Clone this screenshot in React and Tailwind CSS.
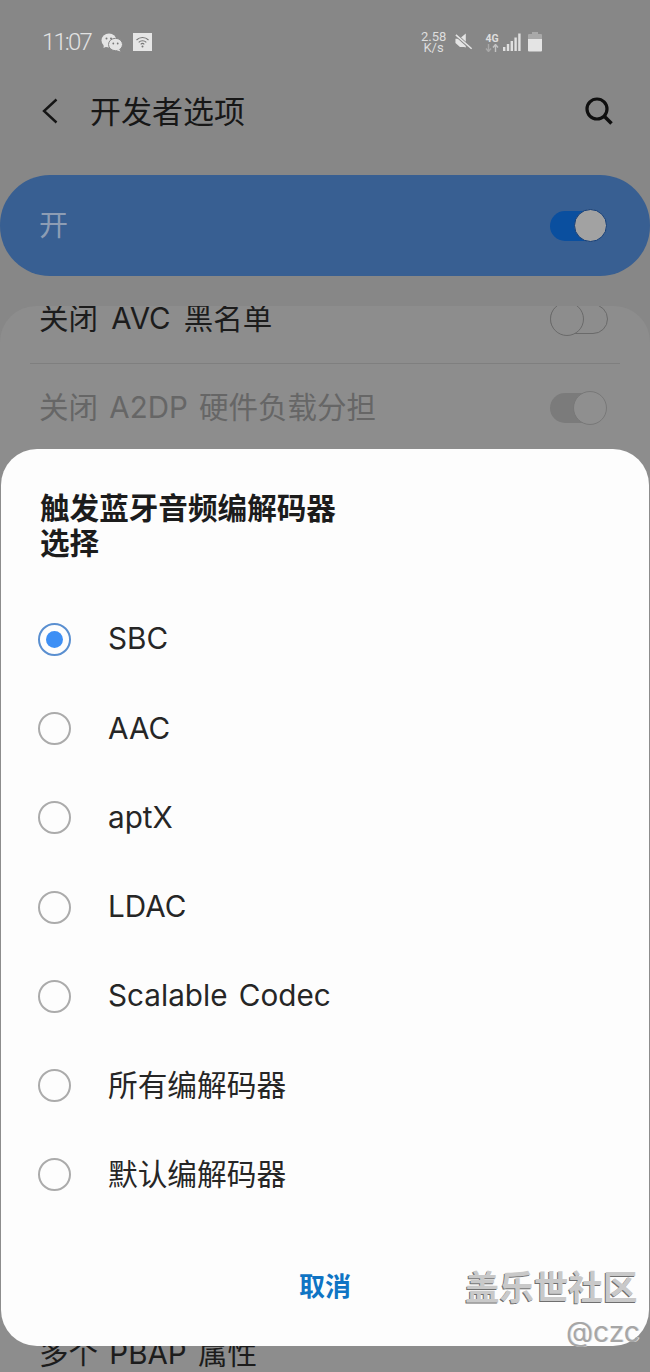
const FONT = "font-['Inter','Noto_Sans_CJK_SC',sans-serif]"

const options = ['SBC', 'AAC', 'aptX', 'LDAC', 'Scalable Codec', '所有编解码器', '默认编解码器']

function StatusLeft() {
  return (
    <div className="flex items-center gap-[10px]">
      <span className="font-['Roboto'] text-[24px] font-light leading-none tracking-[-1.9px] text-[#e2e2e2]">11:07</span>
      {/* wechat */}
      <svg width="22" height="19" viewBox="0 0 22 19">
        <ellipse cx="8" cy="7.5" rx="7.5" ry="7" fill="#e4e4e4" />
        <path d="M3 11 L2.5 15 L7 13 Z" fill="#e4e4e4" />
        <ellipse cx="14.5" cy="11.5" rx="7" ry="6.2" fill="#e4e4e4" stroke="#868686" strokeWidth="1" />
        <path d="M18 16 L19.5 18.5 L15 17 Z" fill="#e4e4e4" />
        <circle cx="5.5" cy="5.5" r="1" fill="#777" />
        <circle cx="10" cy="5.5" r="1" fill="#777" />
        <circle cx="12.3" cy="10.5" r="0.9" fill="#777" />
        <circle cx="16.7" cy="10.5" r="0.9" fill="#777" />
      </svg>
      {/* wifi box */}
      <svg width="19" height="18" viewBox="0 0 19 18">
        <rect width="19" height="18" fill="#e6e6e6" />
        <path d="M3.5 7 A8.5 8.5 0 0 1 15.5 7" stroke="#777" strokeWidth="1.1" fill="none" />
        <path d="M5.7 9.3 A5.4 5.4 0 0 1 13.3 9.3" stroke="#777" strokeWidth="1.1" fill="none" />
        <path d="M7.7 11.3 A2.6 2.6 0 0 1 11.3 11.3" stroke="#777" strokeWidth="1.1" fill="none" />
        <circle cx="9.5" cy="13.6" r="1" fill="#777" />
      </svg>
    </div>
  )
}

function StatusRight() {
  return (
    <div className="flex items-center font-['Roboto']">
      <div className="w-[25px] text-center text-[13px] leading-[11px] text-[#dedede]">
        <div>2.58</div>
        <div>K/s</div>
      </div>
      {/* muted speaker */}
      <svg width="18" height="18" viewBox="0 0 20 20" className="ml-[9px]">
        <path d="M0.5 6.5 H5 L12 0.5 V16 L10 15.5 H5.5 L0.5 11 Z" fill="#e4e4e4" />
        <path d="M1.5 2.5 L18.5 18" stroke="#868686" strokeWidth="3.5" />
        <path d="M1 2 L18.5 17.5" stroke="#e4e4e4" strokeWidth="1.8" />
      </svg>
      <div className="ml-[11px] flex w-[16px] flex-col items-center">
        <span className="text-[10.5px] font-bold leading-[11px] text-[#dedede]">4G</span>
        <svg width="14" height="8" viewBox="0 0 14 8">
          <path d="M3.5 0 V7 M1 4.5 L3.5 7.5 L6 4.5" stroke="#a8a8a8" strokeWidth="1.4" fill="none" />
          <path d="M10.5 8 V1 M8 3.5 L10.5 0.5 L13 3.5" stroke="#c4c4c4" strokeWidth="1.4" fill="none" />
        </svg>
      </div>
      {/* signal */}
      <svg width="18" height="18" viewBox="0 0 18 18" className="ml-[3px]">
        <rect x="0" y="14" width="2.4" height="4" fill="#e0e0e0" />
        <rect x="3.8" y="11" width="2.4" height="7" fill="#e0e0e0" />
        <rect x="7.6" y="8" width="2.4" height="10" fill="#e0e0e0" />
        <rect x="11.4" y="4.5" width="2.4" height="13.5" fill="#e0e0e0" />
        <rect x="15.2" y="0.5" width="2.4" height="17.5" fill="#e0e0e0" />
      </svg>
      {/* battery */}
      <svg width="14" height="20" viewBox="0 0 14 20" className="ml-[7px]">
        <path d="M4 0 H10 V2 H13 Q14 2 14 3 V7 H0 V3 Q0 2 1 2 H4 Z" fill="#a9a9a9" />
        <path d="M0 7 H14 V18.5 Q14 19.5 13 19.5 H1 Q0 19.5 0 18.5 Z" fill="#e4e4e4" />
      </svg>
    </div>
  )
}

function Toggle({ kind }) {
  if (kind === 'blue') {
    return (
      <div className="relative h-[30px] w-[57px]">
        <div className="h-full w-[40px] rounded-l-full bg-[#0a4f9f]" />
        <div className="absolute right-0 top-[-2px] h-[33px] w-[33px] rounded-full border-[1.5px] border-[#163f78] bg-[#a2a2a2]" />
      </div>
    )
  }
  if (kind === 'off') {
    return (
      <div className="relative h-[30px] w-[58px] rounded-full border-[1.5px] border-[#6a6a6a]">
        <div className="absolute left-[-1.5px] top-[-3px] h-[34px] w-[34px] rounded-full border-[1.5px] border-[#6a6a6a] bg-[#8d8d8d]" />
      </div>
    )
  }
  return (
    <div className="relative h-[30px] w-[57px]">
      <div className="h-full w-[40px] rounded-l-full bg-[#7b7b7b]" />
      <div className="absolute right-0 top-[-2px] h-[34px] w-[34px] rounded-full border-[1.5px] border-[#787878] bg-[#8f8f8f]" />
    </div>
  )
}

function Radio({ checked }) {
  return (
    <div className={`flex h-[33px] w-[33px] items-center justify-center rounded-full border-2 ${checked ? 'border-[#5a8fd0]' : 'border-[#ababab]'}`}>
      {checked && <div className="h-[17px] w-[17px] rounded-full bg-[#3d8ff5]" />}
    </div>
  )
}

export default function App() {
  return (
    <div className={`${FONT} relative h-[1372px] w-[650px] overflow-hidden bg-[#878787] [word-spacing:3px]`}>
      {/* status bar */}
      <div className="flex h-[84px] items-center justify-between pl-[42px] pr-[108px]">
        <StatusLeft />
        <StatusRight />
      </div>

      {/* title */}
      <div className="flex h-[54px] items-center pl-[42px] pr-[37px]">
        <svg width="16" height="26" viewBox="0 0 16 26">
          <path d="M14.5 1.5 L2 13 L14.5 24.5" stroke="#151515" strokeWidth="2.4" fill="none" />
        </svg>
        <span className="ml-[32px] text-[31px] leading-none text-[#171717]">开发者选项</span>
        <svg width="28" height="28" viewBox="0 0 28 28" className="ml-auto">
          <circle cx="12" cy="12" r="10" stroke="#0f0f0f" strokeWidth="3.2" fill="none" />
          <path d="M19 19 L26.5 26.5" stroke="#0f0f0f" strokeWidth="3.6" />
        </svg>
      </div>

      {/* master switch */}
      <div className="mt-[37px] flex h-[101px] items-center justify-between rounded-[50px] bg-[#385f92] pl-[39px] pr-[43px]">
        <span className="text-[29px] leading-none text-[#8d9db4]">开</span>
        <Toggle kind="blue" />
      </div>

      {/* settings list behind the dialog */}
      <div className="mt-[30px] h-[1066px] overflow-hidden rounded-t-[36px] bg-[#8d8d8d] px-[30px]">
        <div className="mt-[-32px]">
          <div className="flex h-[90px] items-center justify-between border-b border-[#7f7f7f] pl-[9px] pr-[12px]">
            <span className="text-[29.5px] leading-none text-[#1c1c1c] [word-spacing:5px]">关闭 AVC 黑名单</span>
            <Toggle kind="off" />
          </div>
          <div className="flex h-[88px] items-center justify-between pl-[9px] pr-[13px]">
            <span className="text-[29.5px] leading-none text-[#666666]">关闭 A2DP 硬件负载分担</span>
            <Toggle kind="dim" />
          </div>
          <div className="mt-[887px] pl-[9px]">
            <span className="text-[29.5px] leading-none text-[#1c1c1c]">多个 PBAP 属性</span>
          </div>
        </div>
      </div>

      {/* dialog */}
      <div className="absolute left-[1px] right-[1px] top-[449px] h-[897px] rounded-[36px] bg-[#fdfdfd] pl-[37px]">
        <div className="pl-[2px] pt-[42px] text-[29.6px] font-bold leading-[35px] text-[#1c1c1c]">
          <div>触发蓝牙音频编解码器</div>
          <div>选择</div>
        </div>
        <div className="mt-[33.5px]">
          {options.map((o, i) => (
            <div key={o} className="flex h-[89.3px] items-center gap-[37px]">
              <Radio checked={i === 0} />
              <span className="text-[29.7px] leading-none text-[#262626]">{o}</span>
            </div>
          ))}
        </div>
        <div className="mt-[54px] pl-[261px] text-[26px] font-bold leading-none text-[#0f74c4]">取消</div>
      </div>

      {/* watermark */}
      <div className="absolute left-[465px] top-[1271px] text-[34.5px] font-bold leading-none text-[#c9c9c9] [text-shadow:-1px_1px_0_#6f6f6f]">盖乐世社区</div>
      <div className="absolute left-[566px] top-[1318px] text-[28px] leading-none text-[#a6a6a6] [text-shadow:1px_0_0_#e0e0e0]">@czc</div>
    </div>
  )
}
